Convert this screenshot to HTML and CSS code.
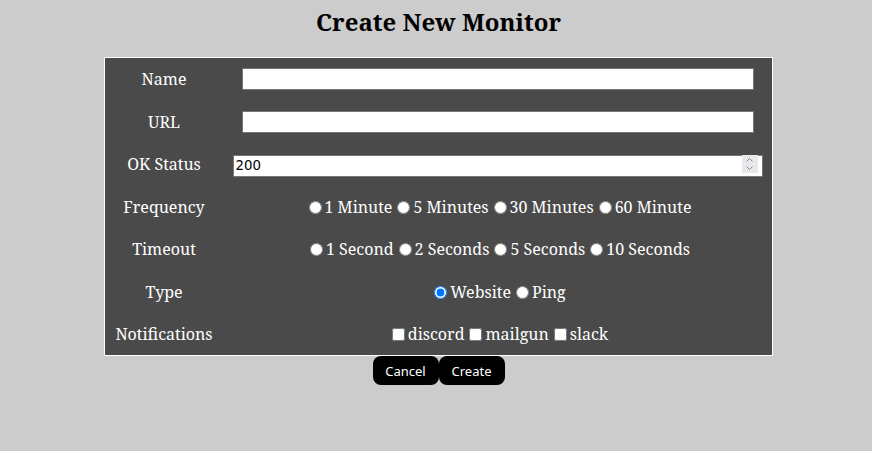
FILE: index.html
```html
<!DOCTYPE html>
<html>
<head>
<meta charset="utf-8">
<link rel="stylesheet" href="styles.css">
</head>
<body>
<main class="page">
  <h1 class="title">Create New Monitor</h1>
  <form class="card">
    <div class="label">Name</div>
    <div class="field"><input class="text" type="text"></div>

    <div class="label">URL</div>
    <div class="field"><input class="text" type="text"></div>

    <div class="label">OK Status</div>
    <div class="field">
      <div class="numwrap">
        <input class="num" type="number" value="200">
        <span class="spin">
          <svg width="9" height="14" viewBox="0 0 9 14"><path d="M1.5 4.5 L4.5 1.5 L7.5 4.5 M1.5 9.5 L4.5 12.5 L7.5 9.5" fill="none" stroke="#8a8a8a" stroke-width="1"/></svg>
        </span>
      </div>
    </div>

    <div class="label">Frequency</div>
    <div class="field">
      <label><input type="radio" name="freq">1 Minute</label>
      <label><input type="radio" name="freq">5 Minutes</label>
      <label><input type="radio" name="freq">30 Minutes</label>
      <label><input type="radio" name="freq">60 Minute</label>
    </div>

    <div class="label">Timeout</div>
    <div class="field">
      <label><input type="radio" name="to">1 Second</label>
      <label><input type="radio" name="to">2 Seconds</label>
      <label><input type="radio" name="to">5 Seconds</label>
      <label><input type="radio" name="to">10 Seconds</label>
    </div>

    <div class="label">Type</div>
    <div class="field">
      <label><input type="radio" name="type" checked>Website</label>
      <label><input type="radio" name="type">Ping</label>
    </div>

    <div class="label">Notifications</div>
    <div class="field">
      <label><input type="checkbox">discord</label>
      <label><input type="checkbox">mailgun</label>
      <label><input type="checkbox">slack</label>
    </div>
  </form>
  <div class="actions">
    <button class="btn" type="button">Cancel</button>
    <button class="btn" type="button">Create</button>
  </div>
</main>
</body>
</html>
```
FILE: styles.css
```css
html, body {
  margin: 0;
  background: #cccccc;
}
.page {
  padding-left: 5px;
  display: flex;
  flex-direction: column;
  align-items: center;
  font-family: "Noto Serif", "DejaVu Serif Condensed", serif;
  font-size: 16px;
}
.title {
  margin: 7px 0 20px;
  font-size: 24px;
  line-height: 30px;
  font-weight: bold;
  color: #000;
}
.card {
  box-sizing: border-box;
  width: 669px;
  height: 299px;
  background: #4a4a4a;
  border: 1px solid #ffffff;
  padding: 2px;
  display: grid;
  grid-template-columns: 114px 1fr;
  grid-auto-rows: 40px;
  column-gap: 4px;
  row-gap: 2.5px;
  color: #ffffff;
}
.label, .field {
  display: flex;
  align-items: center;
  justify-content: center;
  white-space: nowrap;
  padding-bottom: 2px;
}
.field label {
  display: inline-flex;
  align-items: center;
}
.field input[type=radio],
.field input[type=checkbox] {
  margin: 1px 3px 0 5px;
  width: 13px;
  height: 13px;
}
.text, .num {
  box-sizing: border-box;
  height: 22px;
  border: 1px solid #767676;
  background: #fff;
  font-family: "DejaVu Sans", sans-serif;
  font-size: 13.3px;
  padding: 1px 2px;
}
.text { width: 512px; }
.numwrap {
  position: relative;
  width: 530px;
  height: 22px;
}
.num { width: 530px; }
.num::-webkit-inner-spin-button,
.num::-webkit-outer-spin-button {
  -webkit-appearance: none;
  margin: 0;
}
.spin {
  position: absolute;
  right: 5px;
  top: 2px;
  width: 16px;
  height: 18px;
  background: #e9e9ed;
  display: flex;
  align-items: center;
  justify-content: center;
}
.actions {
  display: flex;
  gap: 0;
}
.btn {
  box-sizing: border-box;
  width: 66px;
  height: 29px;
  background: #000;
  color: #fff;
  border: none;
  border-radius: 8px;
  font-family: "Noto Sans", sans-serif;
  font-size: 13px;
  padding: 0;
}
```
